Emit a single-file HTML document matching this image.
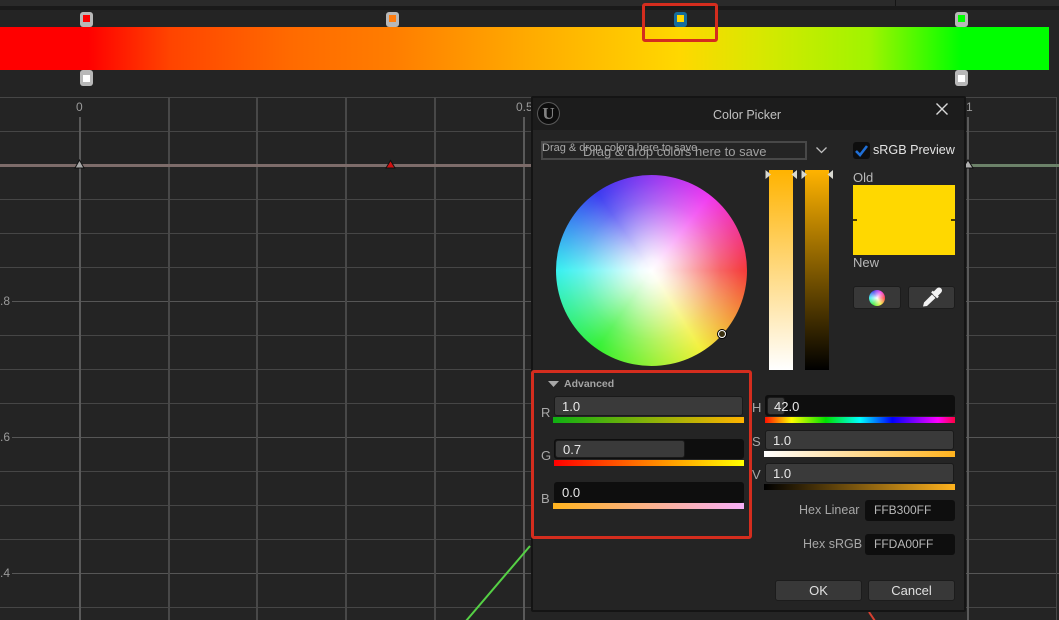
<!DOCTYPE html>
<html>
<head>
<meta charset="utf-8">
<style>
html,body{margin:0;padding:0;background:#242424;}
#p{position:relative;width:1059px;height:620px;overflow:hidden;background:#242424;font-family:"Liberation Sans",sans-serif;color:#c4c4c4;filter:blur(.35px);}
#p div{position:absolute;box-sizing:border-box;}
.h{left:0;width:1056px;height:1px;background:#464646;}
.v{width:2px;background:#484848;top:97px;height:523px;}
.t{white-space:nowrap;line-height:1;}
.handle{width:13px;height:16px;background:#b8b8b8;border-radius:3px;}
.handle i{position:absolute;left:3px;width:7px;height:7px;display:block;}
.fld{border-radius:3px;background:#0e0e0e;}
.fill{border-radius:3px;background:#3a3a3a;border:1px solid #1a1a1a;}
.val{color:#e8e8e8;font-size:13px;}
.lbl{color:#a8a8a8;font-size:13px;}
.btn{background:#383838;border-radius:3px;border:1px solid #1c1c1c;text-align:center;color:#e0e0e0;font-size:13px;}
</style>
</head>
<body>
<div id="p">
  <div style="left:0;top:0;width:1059px;height:6px;background:#2a2a2a"></div>
  <div style="left:0;top:6px;width:1059px;height:4px;background:#1a1a1a"></div>
  <div style="left:895px;top:0;width:1px;height:6px;background:#151515"></div>

  <div class="h" style="top:97px"></div>
  <div class="h" style="top:131px"></div>
  <div class="h" style="top:199px"></div>
  <div class="h" style="top:233px"></div>
  <div class="h" style="top:267px"></div>
  <div class="h" style="top:301px;left:12px;background:#565656"></div>
  <div class="h" style="top:335px"></div>
  <div class="h" style="top:369px"></div>
  <div class="h" style="top:403px"></div>
  <div class="h" style="top:437px;left:12px;background:#565656"></div>
  <div class="h" style="top:471px"></div>
  <div class="h" style="top:505px"></div>
  <div class="h" style="top:539px"></div>
  <div class="h" style="top:573px;left:12px;background:#565656"></div>
  <div class="h" style="top:607px"></div>

  <div class="v" style="left:79px;top:117px;height:503px;background:#5a5a5a"></div>
  <div class="v" style="left:168px"></div>
  <div class="v" style="left:256px"></div>
  <div class="v" style="left:345px"></div>
  <div class="v" style="left:434px"></div>
  <div class="v" style="left:523px;top:117px;height:503px;background:#5a5a5a"></div>
  <div class="v" style="left:967px;top:117px;height:503px;background:#5a5a5a"></div>
  <div class="v" style="left:1056px;width:1px"></div>

  <div class="t" style="left:76px;top:101px;font-size:12px;color:#9a9a9a">0</div>
  <div class="t" style="left:516px;top:101px;font-size:12px;color:#9a9a9a">0.5</div>
  <div class="t" style="left:966px;top:101px;font-size:12px;color:#9a9a9a">1</div>
  <div class="t" style="left:0;top:295px;font-size:12px;color:#9a9a9a">.8</div>
  <div class="t" style="left:0;top:431px;font-size:12px;color:#9a9a9a">.6</div>
  <div class="t" style="left:0;top:567px;font-size:12px;color:#9a9a9a">.4</div>

  <div style="left:0;top:164px;width:534px;height:2.5px;background:#7d6c6a"></div>
  <div style="left:968px;top:164px;width:91px;height:2.5px;background:#6c8269"></div>

  <svg style="position:absolute;left:0;top:0" width="1059" height="620">
    <path d="M75 168L79.500 160L84 168Z" fill="#a8a8a8" stroke="#111" stroke-width="1"/>
    <path d="M386 168L390.500 160.500L395 168Z" fill="#d01010" stroke="#111" stroke-width="1"/>
    <path d="M963 168L968 160L973 168Z" fill="#b0b0b0" stroke="#111" stroke-width="1"/>
    <path d="M466 621L530 546" stroke="#55d045" stroke-width="2" fill="none"/>
    <path d="M869 612L875 621" stroke="#d84030" stroke-width="2" fill="none"/>
  </svg>

  <div style="left:0;top:27px;width:1049px;height:43px;background:linear-gradient(90deg,#ff0000 0,#ff0000 88px,#ff4400 170px,#ff6a00 290px,#ff7d00 392px,#ffab00 530px,#ffd800 680px,#d8e800 760px,#a0f400 870px,#00ff00 961px,#00ff00 1049px)"></div>

  <div class="handle" style="left:80px;top:12px;height:15px"><i style="top:3px;background:#f00"></i></div>
  <div class="handle" style="left:386px;top:12px;height:15px"><i style="top:3px;background:#ff7d10"></i></div>
  <div class="handle" style="left:674px;top:12px;height:15px;background:#156c9c"><i style="top:3px;background:#ffd800"></i></div>
  <div class="handle" style="left:955px;top:12px;height:15px"><i style="top:3px;background:#00ff00"></i></div>
  <div class="handle" style="left:80px;top:70px"><i style="top:5px;background:#fff"></i></div>
  <div class="handle" style="left:955px;top:70px"><i style="top:5px;background:#fff"></i></div>

  <div style="left:642px;top:3px;width:76px;height:39px;border:3px solid #d42d1e;border-radius:3px"></div>

  <!-- dialog -->
  <div style="left:531px;top:96px;width:435px;height:516px;background:#242424;border:2px solid #141414;border-radius:2px"></div>
  <div style="left:533px;top:98px;width:431px;height:32px;background:#1c1c1c"></div>
  <div style="left:537px;top:102px;width:23px;height:23px;border-radius:50%;background:#0d0d0d;border:1px solid #5a5a5a"></div>
  <div class="t" style="left:542px;top:105px;width:13px;text-align:center;font-family:'Liberation Serif',serif;font-weight:bold;font-size:17px;color:#828282">U</div>
  <div class="t" style="left:713px;top:109px;font-size:12.500px;color:#c0c0c0">Color Picker</div>
  <svg style="position:absolute;left:935px;top:102px" width="14" height="14"><path d="M1.500 1.500L12.500 12.500M12.500 1.500L1.500 12.500" stroke="#d8d8d8" stroke-width="1.400" fill="none"/></svg>

  <div style="left:541px;top:141px;width:266px;height:19px;border:2px solid #484848"></div>
  <div class="t" style="left:542px;top:143px;font-size:11px;color:#a8a8a8">Drag &amp; drop colors here to save</div>
  <div class="t" style="left:583px;top:145px;font-size:13px;color:#a0a0a0">Drag &amp; drop colors here to save</div>
  <svg style="position:absolute;left:815px;top:146px" width="13" height="9"><path d="M1.500 1.500L6.500 6.500L11.500 1.500" stroke="#c0c0c0" stroke-width="1.300" fill="none"/></svg>
  <div style="left:853px;top:142px;width:17px;height:17px;background:#0e0e0e;border-radius:3px"></div>
  <svg style="position:absolute;left:853px;top:142px" width="17" height="17"><path d="M3 9L7 13L14 4" stroke="#1f6fd6" stroke-width="2.600" fill="none"/></svg>
  <div class="t" style="left:873px;top:144px;font-size:12.600px;color:#e4e4e4">sRGB Preview</div>

  <!-- wheel -->
  <div style="left:555.500px;top:174.500px;width:191px;height:191px;border-radius:50%;background:radial-gradient(circle closest-side,#ffffff 0,rgba(255,255,255,.92) 12%,rgba(255,255,255,.72) 30%,rgba(255,255,255,.48) 50%,rgba(255,255,255,.22) 72%,rgba(255,255,255,.05) 92%,rgba(255,255,255,0) 100%),conic-gradient(from 90deg,#f43a3a 0deg,#f2f03a 58deg,#32f032 125deg,#38f0f0 180deg,#3a3af0 235deg,#f038f0 308deg,#f43a3a 360deg)"></div>
  <div style="left:718px;top:330px;width:8px;height:8px;border-radius:50%;background:#3a3010;border:1.500px solid #fff;box-shadow:0 0 0 1px #000"></div>

  <!-- vertical sliders -->
  <div style="left:769px;top:170px;width:24px;height:200px;background:linear-gradient(180deg,#ffb300,#ffffff)"></div>
  <div style="left:805px;top:170px;width:24px;height:200px;background:linear-gradient(180deg,#ffb300,#000000)"></div>
  <svg style="position:absolute;left:764px;top:168px" width="70" height="14">
    <path d="M1.500 2L7 6.500L1.500 11Z" fill="#d8d8d0"/><path d="M33 2L27.500 6.500L33 11Z" fill="#d8d8d0"/>
    <path d="M37.500 2L43 6.500L37.500 11Z" fill="#d8d8d0"/><path d="M69 2L63.500 6.500L69 11Z" fill="#d8d8d0"/>
  </svg>

  <div class="t" style="left:853px;top:171px;font-size:13px;color:#b8b8b8">Old</div>
  <div style="left:853px;top:185px;width:102px;height:70px;background:#ffd800"></div>
  <div style="left:853px;top:219px;width:4px;height:2px;background:#4a3c00"></div>
  <div style="left:951px;top:219px;width:4px;height:2px;background:#4a3c00"></div>
  <div class="t" style="left:853px;top:256px;font-size:13px;color:#b8b8b8">New</div>

  <div class="btn" style="left:853px;top:286px;width:48px;height:23px"></div>
  <div style="left:869px;top:290px;width:16px;height:16px;border-radius:50%;background:radial-gradient(circle closest-side,#fff 0,rgba(255,255,255,.5) 45%,rgba(255,255,255,0) 100%),conic-gradient(from 90deg,#f44,#ee4,#4e4,#4ee,#44e,#e4e,#f44)"></div>
  <div class="btn" style="left:908px;top:286px;width:47px;height:23px"></div>
  <svg style="position:absolute;left:920px;top:287px" width="24" height="22">
    <path d="M3 19.500L4 15.500L12 7.500L15.500 11L7 19Z" fill="#f2f2f2"/>
    <path d="M12 4.500L18 10.500" stroke="#f2f2f2" stroke-width="2.500" fill="none"/>
    <path d="M16 6.500L19 3.500" stroke="#f2f2f2" stroke-width="6" stroke-linecap="round" fill="none"/>
  </svg>

  <!-- advanced -->
  <div style="left:531px;top:370px;width:221px;height:169px;border:3px solid #d42d1e;border-radius:3px"></div>
  <svg style="position:absolute;left:547px;top:380px" width="13" height="8"><path d="M1 1H12L6.500 7Z" fill="#a8a8a8"/></svg>
  <div class="t" style="left:564px;top:379px;font-size:10.500px;font-weight:bold;color:#a4a4a4">Advanced</div>

  <div class="t lbl" style="left:541px;top:406px">R</div>
  <div class="fld fill" style="left:554px;top:396px;width:189px;height:20px"></div>
  <div class="t val" style="left:562px;top:400px">1.0</div>
  <div style="left:553px;top:417px;width:191px;height:6px;background:linear-gradient(90deg,#0fb012,#ffb300)"></div>

  <div class="t lbl" style="left:541px;top:449px">G</div>
  <div class="fld" style="left:554px;top:439px;width:190px;height:20px"></div>
  <div class="fill" style="left:555px;top:440px;width:130px;height:18px"></div>
  <div class="t val" style="left:563px;top:443px">0.7</div>
  <div style="left:554px;top:460px;width:190px;height:6px;background:linear-gradient(90deg,#ff0000,#ffff00)"></div>

  <div class="t lbl" style="left:541px;top:492px">B</div>
  <div class="fld" style="left:554px;top:482px;width:190px;height:21px"></div>
  <div class="t val" style="left:562px;top:486px">0.0</div>
  <div style="left:553px;top:503px;width:191px;height:6px;background:linear-gradient(90deg,#ffb31e,#f8b0f8)"></div>

  <div class="t lbl" style="left:752px;top:401px">H</div>
  <div class="fld" style="left:765px;top:395px;width:190px;height:21px"></div>
  <div class="fill" style="left:767px;top:397px;width:18px;height:18px"></div>
  <div class="t val" style="left:774px;top:400px">42.0</div>
  <div style="left:765px;top:417px;width:190px;height:6px;background:linear-gradient(90deg,#ff1000,#ffff00 14%,#00e000 32%,#00ffff 50%,#0000ff 67%,#ff00ff 91%,#ff0040)"></div>

  <div class="t lbl" style="left:752px;top:435px">S</div>
  <div class="fill" style="left:765px;top:430px;width:189px;height:20px"></div>
  <div class="t val" style="left:773px;top:434px">1.0</div>
  <div style="left:764px;top:451px;width:191px;height:6px;background:linear-gradient(90deg,#ffffff,#ffb31e)"></div>

  <div class="t lbl" style="left:752px;top:468px">V</div>
  <div class="fill" style="left:765px;top:463px;width:189px;height:20px"></div>
  <div class="t val" style="left:773px;top:467px">1.0</div>
  <div style="left:764px;top:484px;width:191px;height:6px;background:linear-gradient(90deg,#000000,#ffb31e)"></div>

  <div class="t" style="left:799px;top:504px;font-size:12.500px;color:#a8a8a8">Hex Linear</div>
  <div class="fld" style="left:865px;top:500px;width:90px;height:21px"></div>
  <div class="t" style="left:874px;top:504px;font-size:12px;color:#b8b8b8">FFB300FF</div>
  <div class="t" style="left:803px;top:538px;font-size:12.500px;color:#a8a8a8">Hex sRGB</div>
  <div class="fld" style="left:865px;top:534px;width:90px;height:21px"></div>
  <div class="t" style="left:874px;top:538px;font-size:12px;color:#b8b8b8">FFDA00FF</div>

  <div class="btn" style="left:775px;top:580px;width:87px;height:21px;line-height:20px">OK</div>
  <div class="btn" style="left:868px;top:580px;width:87px;height:21px;line-height:20px">Cancel</div>
</div>
</body>
</html>
